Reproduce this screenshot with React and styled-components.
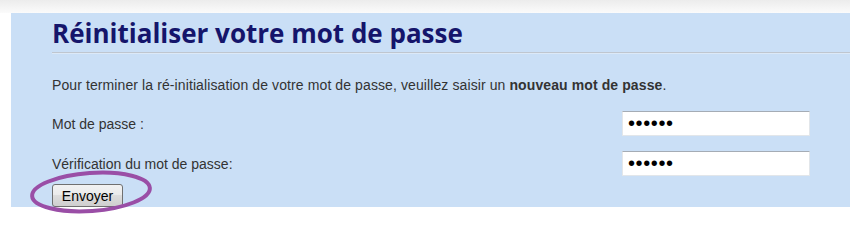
import React from 'react';
import styled, { createGlobalStyle } from 'styled-components';

const GlobalStyle = createGlobalStyle`
  html, body {
    margin: 0;
    padding: 0;
    background: #fff;
  }
  body {
    font-family: 'Liberation Sans', Arial, sans-serif;
  }
`;

const Page = styled.div`
  width: 850px;
  height: 220px;
  overflow: hidden;
  background: #fff;
`;

const TopStrip = styled.div`
  height: 13px;
  background: linear-gradient(#ececec, #fbfbfb);
`;

const Panel = styled.div`
  margin-left: 11px;
  height: 194px;
  padding-left: 41px;
  background-color: #cadff6;
  box-sizing: border-box;
`;

const Title = styled.h1`
  margin: 0;
  padding-top: 2px;
  height: 37px;
  font-family: 'Open Sans', 'Noto Sans', sans-serif;
  font-size: 26px;
  font-weight: 700;
  line-height: 37px;
  color: #15156b;
`;

const Rule = styled.div`
  height: 1px;
  background: #bfc6cf;
  border-bottom: 1px solid #dce9f7;
`;

const Intro = styled.p`
  margin: 0;
  padding-top: 23px;
  font-size: 14px;
  line-height: 16px;
  letter-spacing: 0.1px;
  color: #333;
`;

const Form = styled.form`
  display: flex;
  flex-direction: column;
  padding-top: 18px;
`;

const Row = styled.div`
  display: flex;
  align-items: center;
  justify-content: space-between;
  height: 25px;
  padding-right: 40px;
  margin-bottom: ${({ $gap }) => $gap}px;
`;

const Label = styled.label`
  font-size: 14px;
  color: #333;
`;

const PasswordInput = styled.input`
  width: 188px;
  height: 25px;
  box-sizing: border-box;
  padding: 0 5px;
  border: 1px solid #e2e6ea;
  border-top-color: #a5acb5;
  background: #fff;
  font-family: 'Liberation Sans', Arial, sans-serif;
  font-size: 20px;
  letter-spacing: 0.6px;
  line-height: 23px;
  color: #000;
  outline: none;
`;

const ButtonWrap = styled.div`
  position: relative;
  align-self: flex-start;
`;

const SubmitButton = styled.button`
  width: 71px;
  height: 23px;
  padding: 0;
  border: 1px solid #707070;
  border-radius: 3px;
  background: linear-gradient(#f2f2f2 0%, #ebebeb 45%, #dddddd 50%, #cfcfcf 100%);
  font-family: 'Liberation Sans', Arial, sans-serif;
  font-size: 14px;
  color: #000;
  cursor: pointer;
`;

const Circle = styled.svg`
  position: absolute;
  left: -22px;
  top: -13px;
  pointer-events: none;
  overflow: visible;
`;

export default function App() {
  return (
    <Page>
      <GlobalStyle />
      <TopStrip />
      <Panel>
        <Title>Réinitialiser votre mot de passe</Title>
        <Rule />
        <Intro>
          Pour terminer la ré-initialisation de votre mot de passe, veuillez saisir un <b>nouveau mot de passe</b>.
        </Intro>
        <Form onSubmit={(e) => e.preventDefault()}>
          <Row $gap={15}>
            <Label htmlFor="pwd">Mot de passe :</Label>
            <PasswordInput id="pwd" type="password" defaultValue="secret" />
          </Row>
          <Row $gap={8}>
            <Label htmlFor="pwd2">Vérification du mot de passe:</Label>
            <PasswordInput id="pwd2" type="password" defaultValue="secret" />
          </Row>
          <ButtonWrap>
            <SubmitButton type="submit">Envoyer</SubmitButton>
            <Circle width="124" height="44" viewBox="0 0 124 44">
              <ellipse
                cx="61"
                cy="21"
                rx="59"
                ry="19"
                fill="none"
                stroke="#9a4ea6"
                strokeWidth="4"
                transform="rotate(-4 61 21)"
              />
            </Circle>
          </ButtonWrap>
        </Form>
      </Panel>
    </Page>
  );
}
